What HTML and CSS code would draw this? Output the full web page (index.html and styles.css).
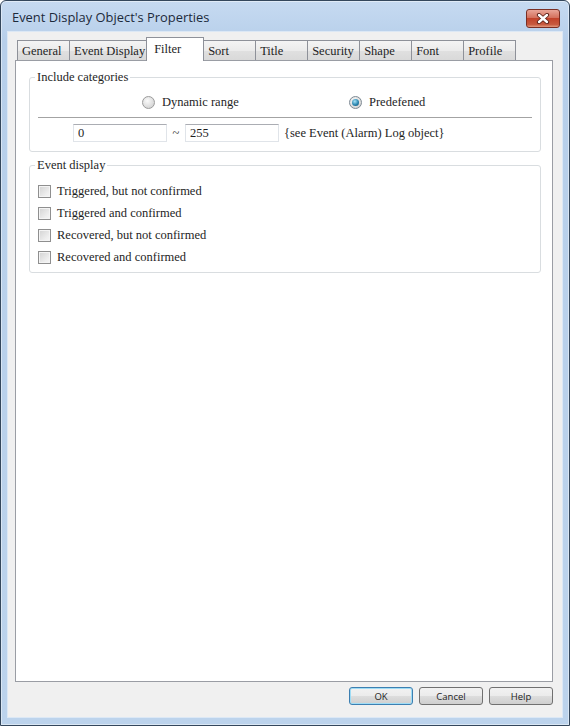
FILE: index.html
```html
<!DOCTYPE html>
<html lang="en">

<head>
    <meta charset="UTF-8">
    <title>Event Display Object's Properties</title>
    <link rel="stylesheet" href="styles.css">
</head>

<body>
    <div class="window">
        <!-- Title bar -->
        <div class="titlebar">
            <span class="title">Event Display Object's Properties</span>
            <div class="close-btn">
                <svg width="14" height="11" viewBox="0 0 14 11">
                    <path d="M3 2 L11 9 M11 2 L3 9" stroke="#5b2118" stroke-width="4.2" stroke-linecap="round" />
                    <path d="M3 2 L11 9 M11 2 L3 9" stroke="#ffffff" stroke-width="2.4" stroke-linecap="round" />
                </svg>
            </div>
        </div>

        <div class="client">
            <!-- Tabs -->
            <div class="tabs">
                <div class="tab">General</div>
                <div class="tab">Event Display</div>
                <div class="tab active">Filter</div>
                <div class="tab">Sort</div>
                <div class="tab">Title</div>
                <div class="tab">Security</div>
                <div class="tab">Shape</div>
                <div class="tab">Font</div>
                <div class="tab">Profile</div>
            </div>

            <div class="tab-page">
                <!-- Include categories -->
                <fieldset class="group">
                    <legend>Include categories</legend>
                    <div class="radio-row">
                        <label class="radio-item first"><span class="radio"></span>Dynamic range</label>
                        <label class="radio-item"><span class="radio checked"><span class="dot"></span></span>Predefened</label>
                    </div>
                    <div class="separator"></div>
                    <div class="range-row">
                        <input class="field" type="text" value="0">
                        <span class="tilde">~</span>
                        <input class="field" type="text" value="255">
                        <span class="hint">{see Event (Alarm) Log object}</span>
                    </div>
                </fieldset>

                <!-- Event display -->
                <fieldset class="group group-events">
                    <legend>Event display</legend>
                    <div class="check-list">
                        <label class="check-row"><span class="checkbox"></span>Triggered, but not confirmed</label>
                        <label class="check-row"><span class="checkbox"></span>Triggered and confirmed</label>
                        <label class="check-row"><span class="checkbox"></span>Recovered, but not confirmed</label>
                        <label class="check-row"><span class="checkbox"></span>Recovered and confirmed</label>
                    </div>
                </fieldset>
            </div>

            <!-- Dialog buttons -->
            <div class="buttons">
                <button class="btn default">OK</button>
                <button class="btn">Cancel</button>
                <button class="btn">Help</button>
            </div>
        </div>
    </div>
</body>

</html>
```

FILE: styles.css
```css
body {
    margin: 0;
    background-color: #ffffff;
}

/* Window frame */
.window {
    width: 570px;
    height: 726px;
    box-sizing: border-box;
    border: 1px solid #34475c;
    border-radius: 6px 6px 0 0;
    background: linear-gradient(to bottom, #c6daf1, #b7cfea 40px, #bcd3ec);
    box-shadow: inset 0 0 0 1px rgba(255, 255, 255, 0.45);
    display: flex;
    flex-direction: column;
}

.titlebar {
    height: 31px;
    display: flex;
    justify-content: space-between;
    align-items: flex-start;
    padding: 0 9px 0 11px;
}

.title {
    margin-top: 7px;
    font-family: "Open Sans", "Liberation Sans", sans-serif;
    font-size: 12.9px;
    color: #1c2a3b;
}

.close-btn {
    margin-top: 8px;
    width: 34px;
    height: 19px;
    box-sizing: border-box;
    border: 1px solid #7a2f24;
    border-radius: 3px;
    background: linear-gradient(to bottom, #e9a597, #d4715d 45%, #c2432b 50%, #c75a3f 85%, #e39a7f);
    display: flex;
    align-items: center;
    justify-content: center;
}

/* Client area */
.client {
    flex: 1;
    margin: 0 7px 8px 7px;
    padding: 5px 9px 12px 7px;
    background-color: #f0f0f0;
    box-shadow: 0 0 0 1px #dce8f5;
    display: flex;
    flex-direction: column;
    font-family: "Liberation Serif", serif;
    font-size: 12.5px;
    color: #1e1e1e;
}

.tabs {
    height: 23px;
    display: flex;
    align-items: flex-end;
    padding-left: 2px;
}

.tab {
    height: 20px;
    line-height: 20px;
    min-width: 53px;
    box-sizing: border-box;
    padding: 0 1px 0 4px;
    border: 1px solid #8e9199;
    border-bottom: none;
    margin-left: -1px;
    background: linear-gradient(to bottom, #f4f4f4, #ebebeb 50%, #e0e0e0 51%, #d9d9d9);
}

.tab:first-child {
    margin-left: 0;
}

.tab.active {
    position: relative;
    z-index: 1;
    height: 24px;
    line-height: 22px;
    margin: 0 0 -1px -1px;
    min-width: 58px;
    padding-left: 7px;
    background: #ffffff;
}

.tab-page {
    flex: 1;
    background-color: #ffffff;
    border: 1px solid #9a9da4;
    padding: 0 11px 0 13px;
}

/* Group boxes */
.group {
    margin: 8px 0 0 0;
    padding: 0 0 9px 0;
    border: 1px solid #d9dde0;
    border-radius: 3px;
}

.group legend {
    margin-left: 5px;
    padding: 0 2px;
    line-height: 16px;
}

.group-events {
    margin-top: 5px;
    padding-bottom: 4px;
}

.radio-row {
    display: flex;
    align-items: center;
    height: 19px;
    margin-top: 8px;
    padding-left: 112px;
}

.radio-item {
    display: flex;
    align-items: center;
    gap: 7px;
}

.radio-item.first {
    width: 207px;
}

.radio {
    width: 13px;
    height: 13px;
    box-sizing: border-box;
    border-radius: 50%;
    border: 1px solid #9b9b9b;
    background: radial-gradient(circle at 40% 35%, #fafafa, #d6d6d6 75%);
    display: flex;
    align-items: center;
    justify-content: center;
}

.radio.checked {
    border-color: #7e8a94;
}

.radio .dot {
    width: 7px;
    height: 7px;
    border-radius: 50%;
    background: radial-gradient(circle at 40% 35%, #a6e3f8, #2b86b0 55%, #0f4a68);
}

.separator {
    margin: 5px 8px 0 8px;
    border-top: 1px solid #a3a3a3;
    border-bottom: 1px solid #ffffff;
}

.range-row {
    display: flex;
    align-items: center;
    margin-top: 5px;
    padding-left: 43px;
}

.field {
    width: 94px;
    height: 18px;
    box-sizing: border-box;
    margin: 0;
    padding: 0 4px;
    border: 1px solid #e0e4e9;
    border-top-color: #abadb3;
    font-family: "Liberation Serif", serif;
    font-size: 12.5px;
    color: #1e1e1e;
    outline: none;
}

.tilde {
    width: 18px;
    text-align: center;
}

.hint {
    margin-left: 5px;
}

/* Check boxes */
.check-list {
    margin-top: 7px;
}

.check-row {
    display: flex;
    align-items: center;
    height: 22px;
    padding-left: 8px;
    gap: 6px;
}

.checkbox {
    width: 13px;
    height: 13px;
    box-sizing: border-box;
    border: 1px solid #8f8f8f;
    background: linear-gradient(135deg, #d2d2d2, #eeeeee 70%, #f6f6f6);
    box-shadow: inset 0 0 0 1px #f4f4f4;
}

/* Dialog buttons */
.buttons {
    display: flex;
    justify-content: flex-end;
    gap: 6px;
    margin-top: 5px;
}

.btn {
    width: 64px;
    height: 18px;
    padding: 0;
    border: 1px solid #707070;
    border-radius: 3px;
    background: linear-gradient(to bottom, #f2f2f2, #ebebeb 50%, #dddddd 51%, #cfcfcf);
    font-family: "Open Sans", "Liberation Sans", sans-serif;
    font-size: 9.5px;
    color: #1e1e1e;
}

.btn.default {
    border-color: #3c7fb1;
    box-shadow: inset 0 0 0 1px #9fdcf5;
}
```
